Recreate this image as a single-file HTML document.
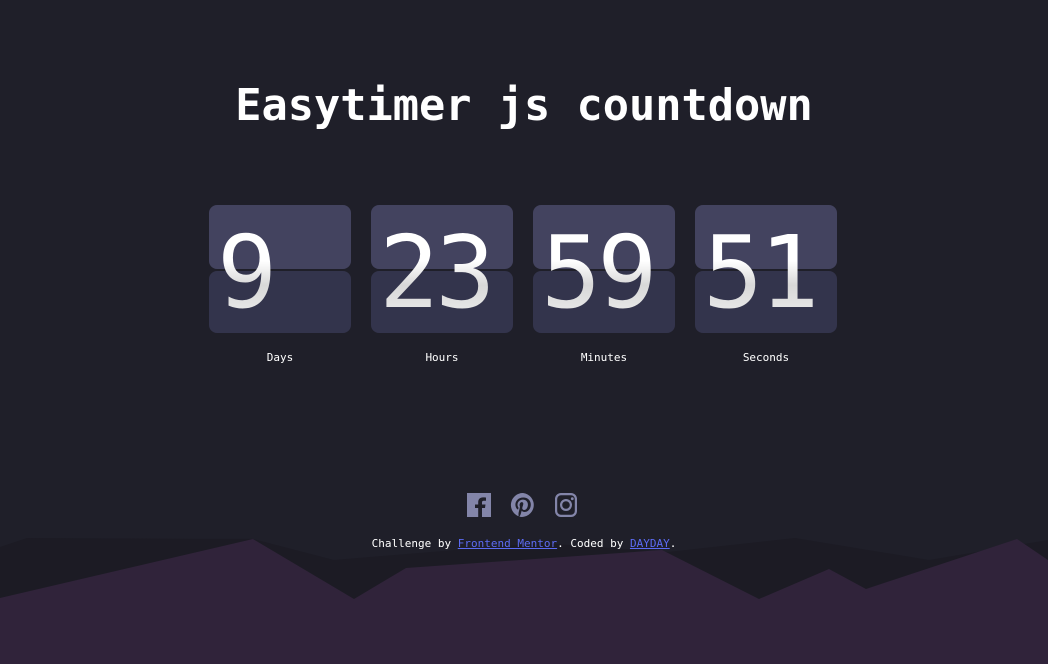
<!DOCTYPE html>
<html><head><meta charset="utf-8"><style>
html,body{margin:0;padding:0;}
body{width:1048px;height:664px;background:#1f1f29;position:relative;overflow:hidden;font-family:"DejaVu Sans Mono","Liberation Mono",monospace;color:#fff;}
h1{position:absolute;top:78px;left:0;width:1048px;text-align:center;margin:0;font-size:43.6px;font-weight:bold;line-height:56px;}
.card{position:absolute;top:205px;width:142px;height:128px;}
.t{position:absolute;left:0;top:0;width:142px;height:64px;background:#43435f;border-radius:8px;}
.b{position:absolute;left:0;top:66px;width:142px;height:62px;background:#33344c;border-radius:8px;}
.d{position:absolute;left:8px;top:8px;font-size:100px;line-height:120px;background:linear-gradient(#fff 40%,#d8d8d8 60%,#f4f4f4);-webkit-background-clip:text;color:transparent;letter-spacing:-4px;}
.l{position:absolute;top:146px;width:142px;text-align:center;font-size:11px;}
svg.m{position:absolute;left:0;top:0;}
.icons{position:absolute;top:493px;left:467px;}
.foot{position:absolute;top:537px;width:1048px;text-align:center;font-size:11px;line-height:14px;}
.foot a{color:#5c6bf3;text-decoration:underline;}
</style></head><body>
<svg class="m" width="1048" height="664">
<polygon fill="#1c1b24" points="0,547 27,538 253,539 334,560 541,543 668,552 795,538 929,560 1048,540 1048,664 0,664"/>
<polygon fill="#30233a" points="0,598 253,539 354,599 406,568 662,550 759,599 829,569 866,589 1017,539 1048,560 1048,664 0,664"/>
</svg>
<h1>Easytimer js countdown</h1>
<div class="card" style="left:209px"><div class="t"></div><div class="b"></div><div class="d">9</div><div class="l">Days</div></div>
<div class="card" style="left:371px"><div class="t"></div><div class="b"></div><div class="d">23</div><div class="l">Hours</div></div>
<div class="card" style="left:533px"><div class="t"></div><div class="b"></div><div class="d">59</div><div class="l">Minutes</div></div>
<div class="card" style="left:695px"><div class="t"></div><div class="b"></div><div class="d">51</div><div class="l">Seconds</div></div>
<svg class="icons" width="115" height="25" viewBox="0 0 115 25">
<g fill="#8385a9">
<path d="M0 0h24v24h-9v-9h3l.5-3.5H15V9.5c0-1 .4-1.7 1.8-1.7H19V4.6c-.4 0-1.6-.2-3-.2-3 0-4.8 1.8-4.8 5v2.1H8V15h3.2v9H0z"/>
<path d="M56 0a12 12 0 0 0-4.4 23.2c-.1-.9-.2-2.4 0-3.4l1.4-6s-.4-.7-.4-1.8c0-1.7 1-2.9 2.2-2.9 1 0 1.5.8 1.5 1.700 0 1-.7 2.6-1 4-.3 1.2.6 2.2 1.8 2.2 2.1 0 3.8-2.3 3.8-5.5 0-2.9-2.1-4.9-5-4.9-3.4 0-5.4 2.6-5.4 5.2 0 1 .4 2.1.9 2.7.1.1.1.2.1.4l-.3 1.4c-.1.2-.2.3-.4.2-1.5-.7-2.4-2.9-2.4-4.7 0-3.8 2.8-7.3 8-7.3 4.2 0 7.4 3 7.4 7 0 4.1-2.6 7.5-6.3 7.5-1.2 0-2.4-.6-2.8-1.4l-.8 2.9c-.3 1.1-1 2.4-1.5 3.2A12 12 0 1 0 56 0z"/>
<path d="M94 0h10a6 6 0 0 1 6 6v12a6 6 0 0 1-6 6H94a6 6 0 0 1-6-6V6a6 6 0 0 1 6-6zm0 2.2A3.8 3.8 0 0 0 90.2 6v12A3.8 3.8 0 0 0 94 21.8h10a3.8 3.8 0 0 0 3.8-3.8V6A3.8 3.8 0 0 0 104 2.2zM99 6a6 6 0 1 1 0 12 6 6 0 0 1 0-12zm0 2.2a3.8 3.8 0 1 0 0 7.6 3.8 3.8 0 0 0 0-7.6zM105.3 4.3a1.4 1.4 0 1 1 0 2.8 1.4 1.4 0 0 1 0-2.8z"/>
</g></svg>
<div class="foot">Challenge by <a>Frontend Mentor</a>. Coded by <a>DAYDAY</a>.</div>
</body></html>
